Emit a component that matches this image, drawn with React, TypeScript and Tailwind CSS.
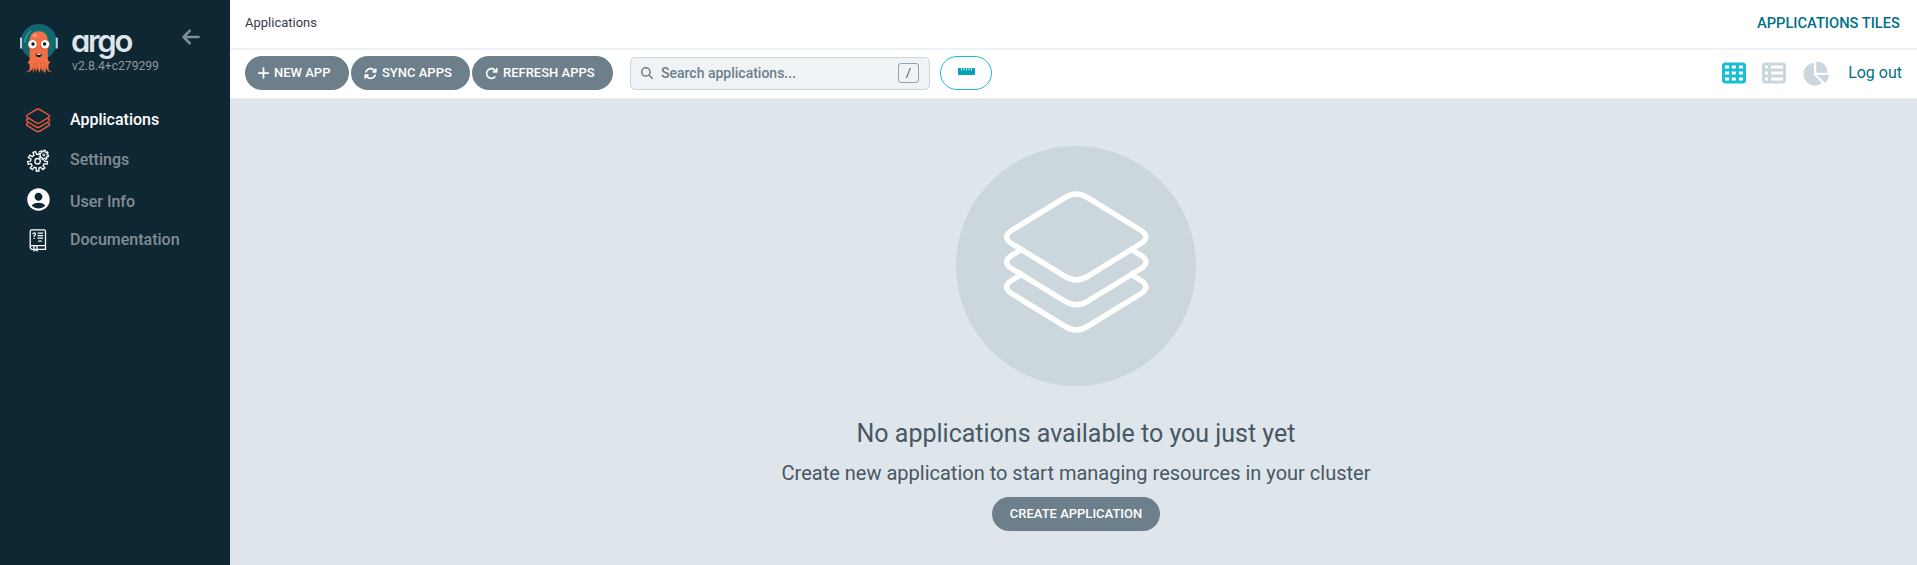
import React from 'react';
import {
  FaArrowLeft,
  FaArrowRotateRight,
  FaArrowsRotate,
  FaChartPie,
  FaMagnifyingGlass,
  FaPlus,
  FaTableCells,
  FaTableList,
} from 'react-icons/fa6';
import { MdAccountCircle } from 'react-icons/md';

function LayersIcon({ className, stroke }: { className: string; stroke: number }) {
  return (
    <svg viewBox="0 0 240 240" className={className} fill="none" stroke="currentColor" strokeWidth={stroke}>
      <path d="M56.3 84L109 51.6Q120.3 44.6 131.6 51.6L184.3 84Q195.6 91 184.3 98L131.6 130.4Q120.3 137.4 109 130.4L56.3 98Q45 91 56.3 84Z" />
      <path d="M67.5 102.2L56.3 109Q45 116 56.3 123L109 155.2Q120.3 162.2 131.6 155.2L184.3 123Q195.6 116 184.3 109L173.1 102.2" />
      <path d="M67.5 127.2L56.3 134Q45 141 56.3 148L109 180.4Q120.3 187.4 131.6 180.4L184.3 148Q195.6 141 184.3 134L173.1 127.2" />
    </svg>
  );
}

function gearPath(cx: number, cy: number, outer: number, inner: number, teeth: number) {
  const points: string[] = [];
  const step = (Math.PI * 2) / teeth;
  for (let i = 0; i < teeth; i++) {
    const a = (i + 0.25) * step;
    const corners: [number, number][] = [
      [inner, -0.28],
      [outer, -0.2],
      [outer, 0.2],
      [inner, 0.28],
    ];
    for (const [r, f] of corners) {
      points.push(`${(cx + r * Math.cos(a + f * step)).toFixed(2)} ${(cy + r * Math.sin(a + f * step)).toFixed(2)}`);
    }
  }
  return `M${points.join('L')}Z`;
}

function GearsIcon() {
  return (
    <svg viewBox="0 0 24 24" className="h-6 w-6 text-white" fill="none" stroke="currentColor" strokeWidth="1.3">
      <path d={gearPath(11.6, 13.2, 9.9, 7, 9)} />
      <circle cx="11.6" cy="13.2" r="2.7" />
      <circle cx="17.8" cy="7" r="5.2" fill="#0f2733" stroke="none" />
      <path d={gearPath(17.8, 7, 4.8, 3.4, 8)} fill="#0f2733" strokeWidth="1.1" />
      <circle cx="17.8" cy="7" r="1" strokeWidth="1" />
    </svg>
  );
}

function ManualIcon() {
  return (
    <svg viewBox="0 0 24 24" className="h-6 w-6 text-white" fill="none" stroke="currentColor" strokeWidth="1.3">
      <path d="M4.2 19.6V3.4A1.6 1.6 0 0 1 5.8 1.800H17.900A1.600 1.600 0 0 1 19.500 3.400V17.600H6.200A2 2 0 0 0 4.200 19.600A1.700 1.700 0 0 0 5.900 21.300H8M11 21.300H19.500V17.600" />
      <path d="M8 17.600v5l1.500-1.200 1.500 1.200v-5" />
      <path d="M6.900 6.200q0-1.300 1.300-1.300t1.300 1.300q0 .8-1.300 1.500v1M8.200 9.800v1.200" />
      <path d="M11.500 5.100h5.600M11.500 7.600h5.600M11.500 10.100h5.600M12.200 13.100h3.600" />
    </svg>
  );
}

function RulerIcon() {
  return (
    <svg viewBox="0 0 17 7" className="-mt-[3px] h-[7px] w-[17px]">
      <rect width="17" height="7" rx="1" fill="#00a2b3" />
      <path d="M3.500 0v2.600M5.900 0v2.600M8.500 0v2.600M11.100 0v2.600M13.500 0v2.600" stroke="#fff" strokeWidth=".8" />
    </svg>
  );
}

function ArgoMascot() {
  return (
    <svg viewBox="0 0 40 52" className="h-[52px] w-10">
      <circle cx="19.800" cy="19" r="18" fill="#1d6179" />
      <circle cx="19.800" cy="19" r="16" fill="#0b6b70" />
      <path d="M6 19A14.500 14.500 0 0 1 12 8" fill="none" stroke="#3e969a" strokeWidth="1.500" strokeLinecap="round" />
      <rect x="1" y="14.500" width="2" height="11" rx=".6" fill="#b9d3e3" />
      <rect x="36.800" y="14.500" width="2" height="11" rx=".6" fill="#b9d3e3" />
      <path
        d="M10.600 18Q10.600 8.200 19.700 8.200T28.800 18V36Q29 39 31.500 39.500L29.500 41Q29 45 30.500 49Q27.500 48 27 44L26.500 50Q24 49 24 44L23.500 49.500L21.800 45L20.500 50L18.500 45L17 49.500L16 44.500L14 50L13.500 44.500Q13 48 9.500 49Q11.500 45 10.500 41L8.300 39.500Q10.500 39 10.600 36Z"
        fill="#f27045"
      />
      <path d="M11 46Q10 48.800 7.500 49M29 46Q30 48.800 32.500 49" fill="none" stroke="#c85a3d" strokeWidth="1" />
      <path d="M14.500 39v6M18 40v6M22 40v6M25.500 39v6" stroke="#d95331" strokeWidth=".6" />
      <ellipse cx="16" cy="12.500" rx="2.600" ry="1.800" fill="#f79573" />
      <circle cx="13.800" cy="21.700" r="4.900" fill="#e8552f" />
      <circle cx="25.800" cy="21.700" r="4.900" fill="#e8552f" />
      <circle cx="13.600" cy="21.300" r="4.200" fill="#fff" />
      <circle cx="26" cy="21.300" r="4.200" fill="#fff" />
      <circle cx="14" cy="21" r="1.700" fill="#0c1a24" />
      <circle cx="25.600" cy="21" r="1.700" fill="#0c1a24" />
      <path d="M16.500 30.400Q19.800 31.400 23.100 30.400Q22.600 34 19.800 34T16.500 30.400Z" fill="#14181d" />
      <path d="M17.900 30.900h3.800v.9h-3.800z" fill="#fff" />
    </svg>
  );
}

function Sidebar() {
  return (
    <aside className="flex w-[230px] shrink-0 flex-col bg-[#0f2733]">
      <div className="flex h-[98px] pl-[19px] pt-[23px]">
        <ArgoMascot />
        <div className="ml-[13px] w-[110px]">
          <div className="h-9 -translate-x-px font-[Inter,sans-serif] text-[31px] leading-9 font-semibold tracking-[-2.3px] text-[#dee6eb] [font-feature-settings:'cv11']">
            argo
          </div>
          <div className="text-[12.150px] leading-[14px] text-[#8f999f]">v2.8.4+c279299</div>
        </div>
        <FaArrowLeft className="mt-[4px] h-5 w-[18px] text-[#818d94]" />
      </div>
      <nav className="pl-[26px] text-base font-medium text-[#818d94]">
        <a className="flex h-[43px] items-center text-white">
          <span className="flex h-[25px] w-11 items-center">
            <LayersIcon className="-ml-[8px] mt-[3px] h-10 w-10 shrink-0 text-[#ef5b3b]" stroke={8} />
          </span>
          Applications
        </a>
        <a className="flex h-[37px] items-center">
          <span className="w-11"><GearsIcon /></span>
          Settings
        </a>
        <a className="flex h-[48px] items-center">
          <span className="w-11"><MdAccountCircle className="-ml-px -mt-[5px] h-[27px] w-[27px] text-white" /></span>
          User Info
        </a>
        <a className="flex h-[27px] items-center">
          <span className="w-11"><ManualIcon /></span>
          Documentation
        </a>
      </nav>
    </aside>
  );
}

const pill = 'flex h-[34px] items-center rounded-full bg-[#6d7f8b] text-[13px] font-medium text-white';

function Toolbar() {
  return (
    <div className="flex h-[49px] items-center border-b border-[#e8eef2] bg-white pr-[15px] pb-[2px] pl-[15px]">
      <button className={`${pill} w-[104px] pl-[12px]`}>
        <FaPlus className="mr-[4px] h-[14px] w-[13px]" />NEW APP
      </button>
      <button className={`${pill} ml-[2px] w-[119px] pl-[13px]`}>
        <FaArrowsRotate className="mr-[5px] h-[13px] w-[13px]" />SYNC APPS
      </button>
      <button className={`${pill} ml-[2px] w-[141px] pl-[13px]`}>
        <FaArrowRotateRight className="mr-[5px] h-[13px] w-[13px]" />REFRESH APPS
      </button>
      <div className="ml-[17px] flex h-[33px] w-[300px] items-center rounded-[5px] border border-[#ccd6dd] bg-[#eff3f5] pl-[10px] pr-[10px] text-[#6d7f8b]">
        <FaMagnifyingGlass className="h-3 w-3" />
        <span className="ml-[8px] flex-1 text-sm font-medium">Search applications...</span>
        <kbd className="flex h-5 w-[21px] items-center justify-center rounded-[3px] border border-[#8fa4b1] font-[Roboto,sans-serif] text-[13px] text-[#495763]">/</kbd>
      </div>
      <button className="ml-[10px] flex h-[34px] w-[52px] items-center justify-center rounded-full border border-[#18bed4]">
        <RulerIcon />
      </button>
      <div className="ml-auto flex items-center text-[#ccd6dd]">
        <FaTableCells className="h-6 w-6 text-[#18bed4]" />
        <FaTableList className="ml-4 h-6 w-6" />
        <FaChartPie className="ml-[16px] h-[25px] w-[27px]" />
        <a className="ml-[19px] text-base text-[#006f8a]">Log out</a>
      </div>
    </div>
  );
}

export default function App() {
  return (
    <div className="flex h-[565px] w-full overflow-hidden bg-[#dee6eb] font-[Roboto,sans-serif]">
      <Sidebar />
      <div className="flex min-w-0 flex-1 flex-col">
        <header className="flex h-[50px] items-center justify-between border-b-2 border-[#edf2f6] bg-white pr-[17px] pl-[15px]">
          <span className="-mt-[2px] text-[13px] text-[#363c4a]">Applications</span>
          <span className="-mt-[2px] text-[14.700px] font-medium text-[#006f8a]">APPLICATIONS TILES</span>
        </header>
        <Toolbar />
        <main className="flex flex-1 flex-col items-center pl-[5px] pt-[47px] text-[#495763]">
          <div className="h-60 w-60 rounded-full bg-[#ccd6dd]">
            <LayersIcon className="h-60 w-60 text-white" stroke={5.4} />
          </div>
          <h4 className="mt-8 text-[25px] leading-8">No applications available to you just yet</h4>
          <h5 className="mt-[9px] text-[20px] leading-7">Create new application to start managing resources in your cluster</h5>
          <button className={`${pill} mt-[10px] w-[168px] justify-center`}>CREATE APPLICATION</button>
        </main>
      </div>
    </div>
  );
}
